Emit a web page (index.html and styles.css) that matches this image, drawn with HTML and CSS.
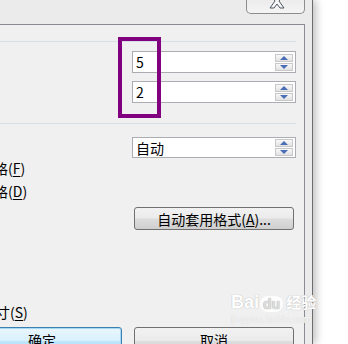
FILE: index.html
```html
<!DOCTYPE html>
<html lang="zh-CN">
<head>
  <meta charset="UTF-8">
  <title>表格属性</title>
  <link rel="stylesheet" href="styles.css">
</head>
<body>
  <div class="screen">
    <div class="window">
      <div class="titlebar">
        <div class="close-btn">
          <svg width="20" height="10" viewBox="0 0 20 10">
            <path d="M3 -6 L7 -6 L10 -2 L13 -6 L17 -6 L12 1 L17 8 L13 8 L10 4 L7 8 L3 8 L8 1 Z" fill="#f7f7f7" stroke="#4e5866" stroke-width="1"/>
          </svg>
        </div>
      </div>
      <div class="panel">
        <div class="sep first"></div>
        <div class="spin">
          <span class="val">5</span>
          <div class="spin-btns"><span class="up"></span><span class="down"></span></div>
        </div>
        <div class="spin second">
          <span class="val">2</span>
          <div class="spin-btns"><span class="up"></span><span class="down"></span></div>
        </div>
        <div class="sep second"></div>
        <div class="spin auto">
          <span class="val">自动</span>
          <div class="spin-btns"><span class="up"></span><span class="down"></span></div>
        </div>
        <div class="label cut6">格(<u>F</u>)</div>
        <div class="label cut6 next">格(<u>D</u>)</div>
        <button class="btn format">自动套用格式(<u>A</u>)...</button>
        <div class="label cut4 size">寸(<u>S</u>)</div>
        <div class="actions">
          <button class="btn ok">确定</button>
          <button class="btn cancel">取消</button>
        </div>
      </div>
    </div>
    <div class="mark"></div>
    <div class="watermark">
      <div class="wm-top"><span class="wm-bai">Bai</span><span class="wm-du">du</span><span class="wm-jy">经验</span></div>
      <div class="wm-url">jingyan.baidu.com</div>
    </div>
  </div>
</body>
</html>
```

FILE: styles.css
```css
html, body { margin: 0; padding: 0; background: #fff; }
body { font-family: "Noto Sans CJK SC", "Liberation Sans", sans-serif; font-size: 14px; color: #000; }
.screen { position: relative; width: 348px; height: 344px; overflow: hidden; }

.window { width: 312px; height: 344px; background: #ebebeb; border-right: 1px solid #6d6d6d; box-shadow: 3px 0 8px rgba(0,0,0,0.25); display: flex; flex-direction: column; }
.titlebar { height: 24px; flex-shrink: 0; display: flex; justify-content: flex-end; padding-right: 7px; }
.close-btn { width: 57px; height: 13px; border: 1px solid #8c8c8c; border-top: none; border-radius: 0 0 5px 5px; background: linear-gradient(#ececec, #f4f4f4); display: flex; justify-content: center; }
.close-btn svg { display: block; margin-left: 2px; }

.panel { flex: 1; min-height: 0; overflow: hidden; margin-right: 7px; background: #f0f0f0; border-top: 1px solid #898c95; border-right: 1px solid #898c95; display: flex; flex-direction: column; align-items: flex-start; }
.panel > * { flex-shrink: 0; }

.sep { height: 1px; width: 296px; background: #d5dfe5; }
.sep.first { margin-top: 16px; }
.sep.second { margin-top: 20px; }

.spin { width: 162px; height: 20px; margin-left: 132px; margin-top: 9px; border: 1px solid #abadb3; background: #fff; display: flex; align-items: center; justify-content: space-between; }
.spin.second { margin-top: 8px; }
.spin.auto { margin-top: 13px; height: 19px; }
.val { padding-left: 3px; line-height: 20px; }
.spin-btns { display: flex; flex-direction: column; gap: 1px; padding-right: 2px; }
.spin-btns span { width: 16px; height: 6px; border: 1px solid #c8c8c8; background: linear-gradient(#f8f8f8, #e2e2e2); display: flex; align-items: center; justify-content: center; }
.spin-btns span::after { content: ""; width: 0; height: 0; border-left: 4px solid transparent; border-right: 4px solid transparent; }
.spin-btns .up::after { border-bottom: 4px solid #4b6db5; }
.spin-btns .down::after { border-top: 4px solid #4b6db5; }

.label { line-height: 20px; white-space: nowrap; }
.label u { text-underline-offset: 2px; }
.cut6 { margin-left: -6px; }
.label.next { margin-top: 3px; }
.cut4 { margin-left: -4px; }
.label.size { margin-top: 72px; }

.btn { font-family: inherit; font-size: 14px; color: #000; height: 23px; width: 160px; padding: 0; border: 1px solid #707070; border-radius: 3px; background: linear-gradient(#f2f2f2 0%, #ebebeb 48%, #dddddd 52%, #cfcfcf 100%); line-height: 20px; }
.btn.format { margin-left: 134px; margin-top: 6px; }
.actions { display: flex; gap: 12px; margin-left: -38px; margin-top: 5px; }
.btn.ok { border-color: #3c7fb1; box-shadow: inset 0 0 0 1px #a7d8f3; background: linear-gradient(#eaf6fd 0%, #d9f0fc 48%, #bee6fd 52%, #a7d9f5 100%); height: 28px; padding-bottom: 3px; }
.btn.cancel { height: 28px; padding-bottom: 3px; }

.mark { position: absolute; left: 118px; top: 37px; width: 35px; height: 73px; border: 4px solid #800080; }

.watermark { position: absolute; left: 231px; top: 292px; color: #fff; font-family: "Liberation Sans", sans-serif; pointer-events: none; }
.wm-top { display: flex; align-items: flex-end; font-weight: bold; font-size: 18px; line-height: 20px; text-shadow: 0 0 1px #bdbdbd, 0 0 1px #bdbdbd; }
.wm-du { margin: 0 1px; padding: 0 3px; background: rgba(255,255,255,0.85); color: #dcdcdc; border-radius: 8px; font-size: 14px; line-height: 16px; }
.wm-jy { font-family: "Noto Sans CJK SC", sans-serif; font-size: 15px; margin-left: 2px; }
.wm-url { font-size: 10px; line-height: 12px; margin-top: 2px; color: #f7f7f7; text-shadow: 0 0 1px #c8c8c8; }
```
